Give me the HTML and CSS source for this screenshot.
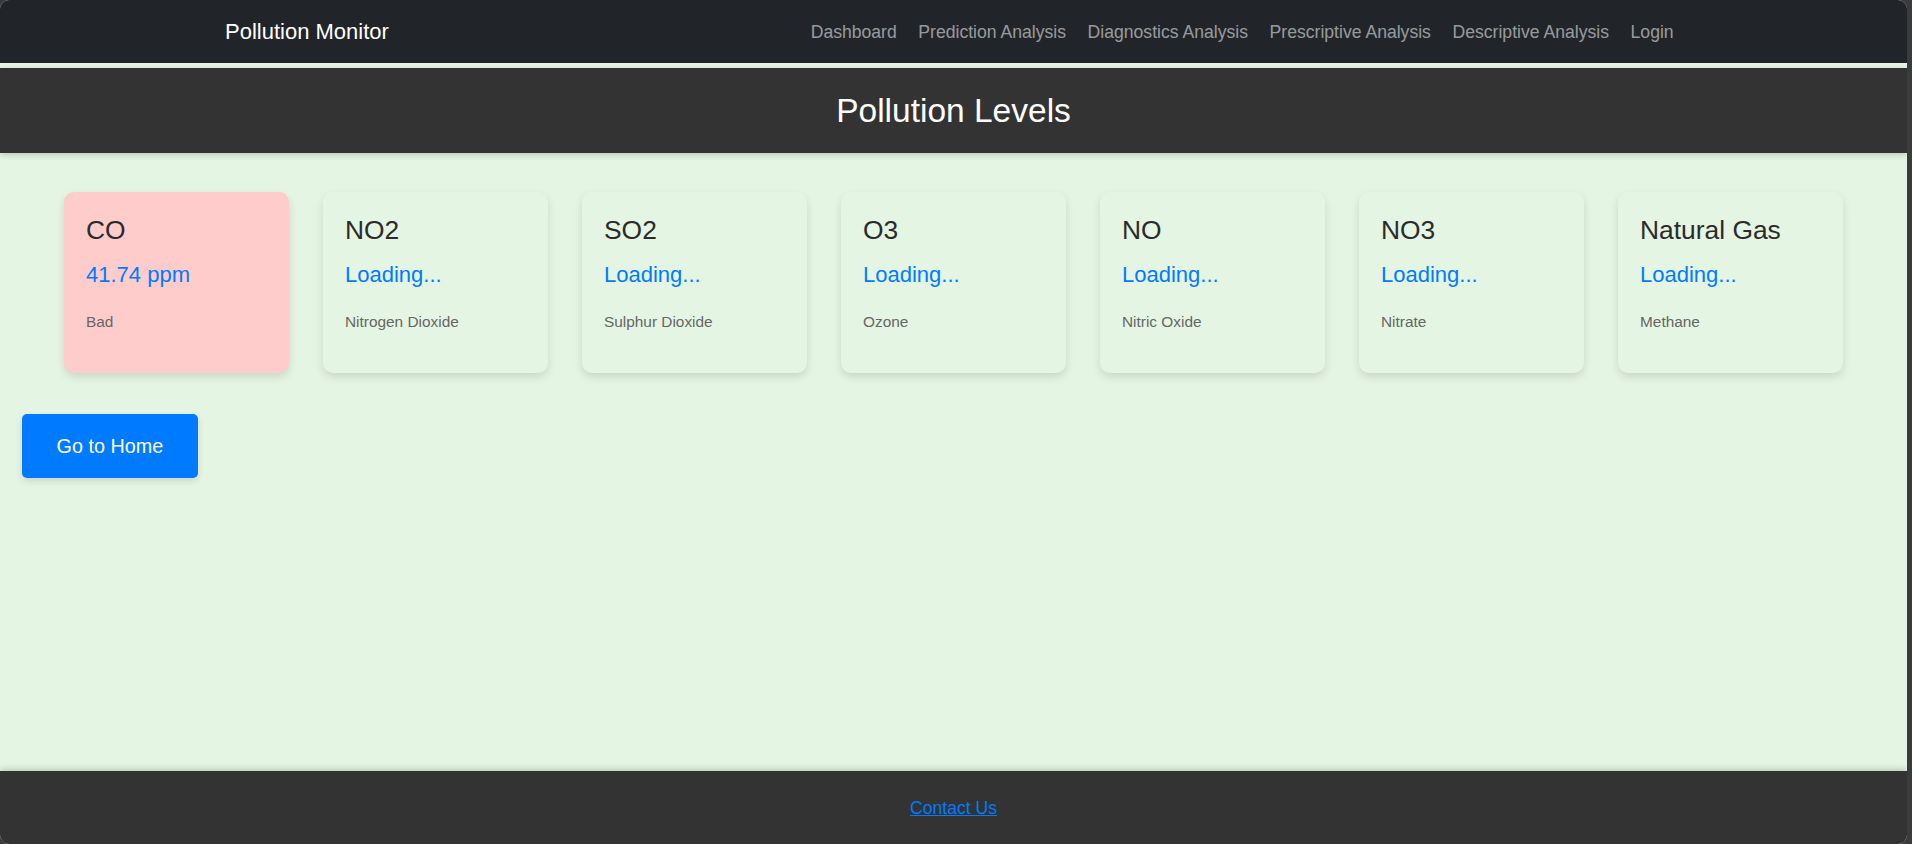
FILE: index.html
```html
<!DOCTYPE html>
<html lang="en">
<head>
<meta charset="utf-8">
<title>Pollution Levels</title>
<link rel="stylesheet" href="styles.css">
</head>
<body>
<div class="window">
  <nav class="navbar">
    <a class="brand" href="#">Pollution Monitor</a>
    <ul class="nav-links">
      <li><a href="#">Dashboard</a></li>
      <li><a href="#">Prediction Analysis</a></li>
      <li><a href="#">Diagnostics Analysis</a></li>
      <li><a href="#">Prescriptive Analysis</a></li>
      <li><a href="#">Descriptive Analysis</a></li>
      <li><a href="#">Login</a></li>
    </ul>
  </nav>
  <header class="page-header">
    <h1>Pollution Levels</h1>
  </header>
  <main class="content">
    <div class="cards">
      <div class="card card-bad">
        <h3>CO</h3>
        <p class="value">41.74 ppm</p>
        <p class="desc">Bad</p>
      </div>
      <div class="card">
        <h3>NO2</h3>
        <p class="value">Loading...</p>
        <p class="desc">Nitrogen Dioxide</p>
      </div>
      <div class="card">
        <h3>SO2</h3>
        <p class="value">Loading...</p>
        <p class="desc">Sulphur Dioxide</p>
      </div>
      <div class="card">
        <h3>O3</h3>
        <p class="value">Loading...</p>
        <p class="desc">Ozone</p>
      </div>
      <div class="card">
        <h3>NO</h3>
        <p class="value">Loading...</p>
        <p class="desc">Nitric Oxide</p>
      </div>
      <div class="card">
        <h3>NO3</h3>
        <p class="value">Loading...</p>
        <p class="desc">Nitrate</p>
      </div>
      <div class="card">
        <h3>Natural Gas</h3>
        <p class="value">Loading...</p>
        <p class="desc">Methane</p>
      </div>
    </div>
    <div class="actions">
      <button class="btn-home" type="button">Go to Home</button>
    </div>
  </main>
  <footer class="footer">
    <a href="#">Contact Us</a>
  </footer>
</div>
</body>
</html>
```

FILE: styles.css
```css
html, body {
  margin: 0;
  padding: 0;
  height: 100%;
  background: #3b3b3b;
  overflow: hidden;
}

body {
  font-family: "Liberation Sans", Arial, sans-serif;
}

.window {
  width: calc(100% - 5px);
  height: 844px;
  display: flex;
  flex-direction: column;
  background: #e5f5e3;
  border-radius: 9px;
  overflow: hidden;
}

.navbar {
  flex: 0 0 63px;
  display: flex;
  align-items: center;
  background: #212529;
  padding-left: 225px;
}

.brand {
  color: #ffffff;
  font-size: 22px;
  text-decoration: none;
  line-height: 26px;
}

.nav-links {
  display: flex;
  list-style: none;
  margin: 0 0 0 411px;
  padding: 0;
}

.nav-links a {
  display: block;
  padding: 0 10.8px;
  color: rgba(255, 255, 255, 0.55);
  font-size: 17.6px;
  line-height: 26px;
  text-decoration: none;
}

.page-header {
  margin-top: 5px;
  flex: 0 0 85px;
  display: flex;
  align-items: center;
  justify-content: center;
  background: #333333;
  box-shadow: 0 2px 6px rgba(0, 0, 0, 0.18);
  position: relative;
  z-index: 1;
}

.page-header h1 {
  margin: 0;
  color: #ffffff;
  font-size: 33.5px;
  font-weight: normal;
  line-height: 40px;
}

.content {
  flex: 1 1 auto;
  padding-top: 39px;
}

.cards {
  display: flex;
  justify-content: center;
  gap: 34px;
}

.card {
  width: 225px;
  box-sizing: border-box;
  height: 181px;
  padding: 23px 22px 0 22px;
  background: #e5f5e3;
  border-radius: 10px;
  box-shadow: 0 4px 9px rgba(0, 0, 0, 0.12);
}

.card-bad {
  background: #ffcccc;
}

.card h3 {
  margin: 0;
  font-size: 26.4px;
  font-weight: normal;
  line-height: 1.2;
  color: #2b2b2b;
}

.card .value {
  margin: 15px 0 0 0;
  font-size: 22px;
  line-height: 1.2;
  color: #007bff;
}

.card .desc {
  margin: 25px 0 0 0;
  font-size: 15.4px;
  line-height: 1.2;
  color: #666666;
}

.actions {
  padding: 41px 0 0 22px;
}

.btn-home {
  border: none;
  background: #007bff;
  color: #ffffff;
  font-family: "Liberation Sans", Arial, sans-serif;
  font-size: 19.8px;
  line-height: 24px;
  padding: 20px 34.5px;
  border-radius: 5px;
  box-shadow: 0 3px 7px rgba(0, 0, 0, 0.12);
  cursor: pointer;
}

.footer {
  flex: 0 0 73px;
  display: flex;
  align-items: center;
  justify-content: center;
  background: #333333;
  box-shadow: 0 -2px 6px rgba(0, 0, 0, 0.18);
  position: relative;
}

.footer a {
  color: #007bff;
  font-size: 17.6px;
  line-height: 22px;
  text-decoration: underline;
}
```
